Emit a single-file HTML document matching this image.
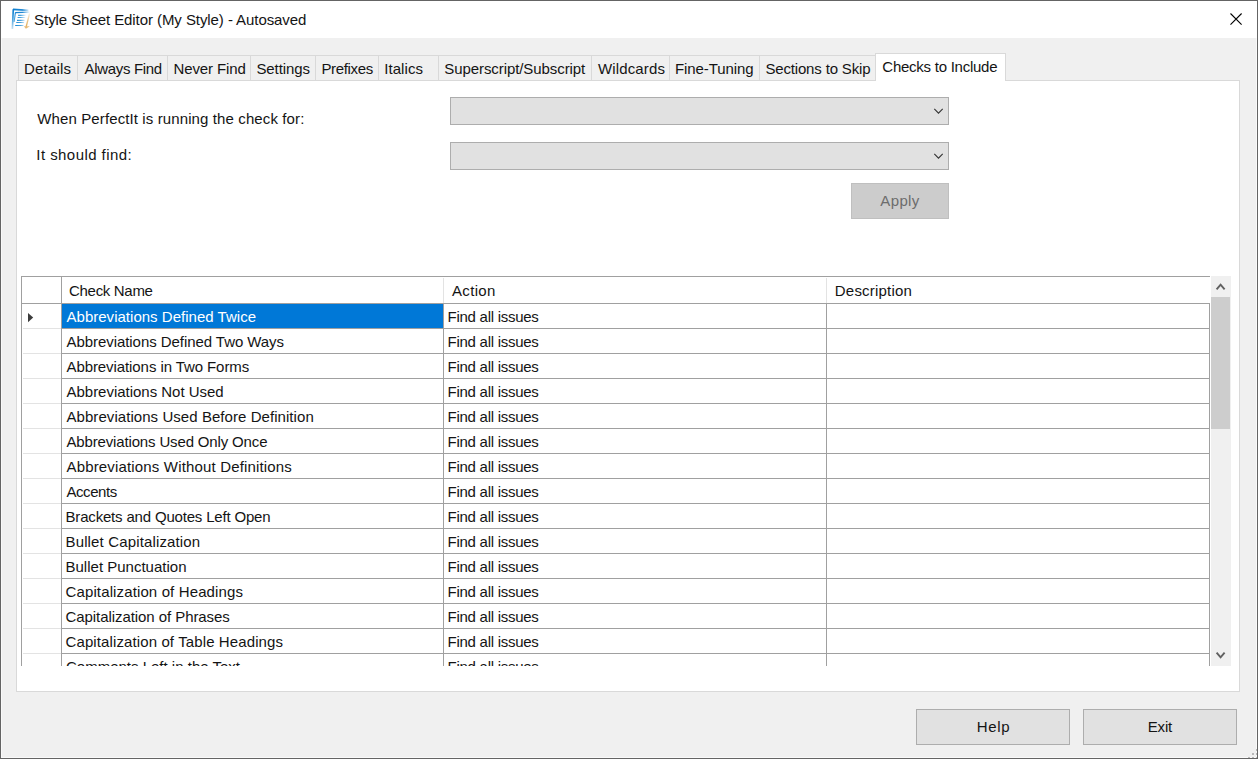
<!DOCTYPE html>
<html><head><meta charset="utf-8"><style>
html,body{margin:0;padding:0;}
body{width:1258px;height:759px;position:relative;overflow:hidden;background:#f0f0f0;font-family:"Liberation Sans", sans-serif;}
.a{position:absolute;}
.t{position:absolute;white-space:nowrap;font-size:15px;line-height:15px;font-family:"Liberation Sans", sans-serif;}
</style></head><body>
<div class="a" style="left:0px;top:0px;width:1258px;height:759px;background:#f0f0f0;"></div>
<div class="a" style="left:1px;top:1px;width:1256px;height:37px;background:#ffffff;"></div>
<div class="a" style="left:1px;top:38px;width:1px;height:720px;background:#f9f9f9;"></div>
<div class="a" style="left:1256px;top:38px;width:1px;height:720px;background:#f9f9f9;"></div>
<div class="a" style="left:1px;top:757px;width:1256px;height:1px;background:#f9f9f9;"></div>
<svg class="a" style="left:10px;top:6px" width="24" height="24" viewBox="0 0 24 24">
<defs>
<linearGradient id="gTop" gradientUnits="userSpaceOnUse" x1="3" y1="0" x2="20" y2="0"><stop offset="0" stop-color="#0b7dcf"/><stop offset="0.55" stop-color="#0b7dcf" stop-opacity="0.9"/><stop offset="1" stop-color="#0b7dcf" stop-opacity="0"/></linearGradient>
<linearGradient id="gLine" gradientUnits="userSpaceOnUse" x1="5" y1="0" x2="16" y2="0"><stop offset="0" stop-color="#1286d4"/><stop offset="0.5" stop-color="#1286d4" stop-opacity="0.75"/><stop offset="1" stop-color="#1286d4" stop-opacity="0"/></linearGradient>
<linearGradient id="gLeft" gradientUnits="userSpaceOnUse" x1="0" y1="3" x2="0" y2="23"><stop offset="0" stop-color="#0b7dcf"/><stop offset="0.5" stop-color="#1a8ad6" stop-opacity="0.8"/><stop offset="1" stop-color="#1a8ad6" stop-opacity="0.25"/></linearGradient>
<linearGradient id="gArr" gradientUnits="userSpaceOnUse" x1="0" y1="7" x2="0" y2="21"><stop offset="0" stop-color="#e0a850" stop-opacity="0.1"/><stop offset="0.6" stop-color="#e0a850" stop-opacity="0.7"/><stop offset="1" stop-color="#e0a850" stop-opacity="0.95"/></linearGradient>
</defs>
<path d="M3 3.3 L18.5 4.4" stroke="url(#gTop)" stroke-width="1.7"/>
<path d="M5.2 6.6 L20 6.2" stroke="url(#gTop)" stroke-width="1.3"/>
<path d="M3.3 3.2 L2.4 23" stroke="url(#gLeft)" stroke-width="1.7"/>
<path d="M5.4 6.6 L4.1 16" stroke="url(#gLeft)" stroke-width="1.1"/>
<path d="M8.1 9.4 L16 9.4 M7.6 11.5 L15.4 11.5 M7 14.4 L14.7 14.4 M6.3 16.5 L14.1 16.5 M5.2 19.5 L13.5 19.5" stroke="url(#gLine)" stroke-width="1.15"/>
<path d="M19.6 7.3 L16.2 20.6" stroke="url(#gArr)" stroke-width="1.4"/>
<path d="M13.9 20.2 L19.8 20.2 L15.9 22.7 Z" fill="#e3ae5e" opacity="0.85"/>
</svg>
<div class="t" style="left:34.10px;top:12.30px;color:#141414;letter-spacing:-0.070px;">Style Sheet Editor (My Style) - Autosaved</div>
<svg class="a" style="left:1229px;top:12px" width="15" height="15" viewBox="0 0 15 15">
<path d="M1.5 1.5 L12.6 12.6 M12.6 1.5 L1.5 12.6" stroke="#000" stroke-width="1.1"/></svg>
<div class="a" style="left:16px;top:80px;width:1224px;height:612px;background:#ffffff;box-sizing:border-box;border:1px solid #d9d9d9;"></div>
<div class="a" style="left:18px;top:55px;width:60px;height:26px;background:#f0f0f0;box-sizing:border-box;border:1px solid #d9d9d9;"></div>
<div class="t" style="left:24.00px;top:61.30px;color:#141414;letter-spacing:0.183px;">Details</div>
<div class="a" style="left:77px;top:55px;width:91px;height:26px;background:#f0f0f0;box-sizing:border-box;border:1px solid #d9d9d9;"></div>
<div class="t" style="left:84.60px;top:61.30px;color:#141414;letter-spacing:-0.330px;">Always Find</div>
<div class="a" style="left:167px;top:55px;width:84px;height:26px;background:#f0f0f0;box-sizing:border-box;border:1px solid #d9d9d9;"></div>
<div class="t" style="left:173.50px;top:61.30px;color:#141414;letter-spacing:-0.122px;">Never Find</div>
<div class="a" style="left:250px;top:55px;width:66px;height:26px;background:#f0f0f0;box-sizing:border-box;border:1px solid #d9d9d9;"></div>
<div class="t" style="left:256.40px;top:61.30px;color:#141414;letter-spacing:-0.071px;">Settings</div>
<div class="a" style="left:315px;top:55px;width:64px;height:26px;background:#f0f0f0;box-sizing:border-box;border:1px solid #d9d9d9;"></div>
<div class="t" style="left:321.40px;top:61.30px;color:#141414;letter-spacing:-0.343px;">Prefixes</div>
<div class="a" style="left:378px;top:55px;width:61px;height:26px;background:#f0f0f0;box-sizing:border-box;border:1px solid #d9d9d9;"></div>
<div class="t" style="left:384.20px;top:61.30px;color:#141414;letter-spacing:0.083px;">Italics</div>
<div class="a" style="left:438px;top:55px;width:154px;height:26px;background:#f0f0f0;box-sizing:border-box;border:1px solid #d9d9d9;"></div>
<div class="t" style="left:444.30px;top:61.30px;color:#141414;letter-spacing:-0.080px;">Superscript/Subscript</div>
<div class="a" style="left:591px;top:55px;width:79px;height:26px;background:#f0f0f0;box-sizing:border-box;border:1px solid #d9d9d9;"></div>
<div class="t" style="left:597.90px;top:61.30px;color:#141414;letter-spacing:0.150px;">Wildcards</div>
<div class="a" style="left:669px;top:55px;width:91px;height:26px;background:#f0f0f0;box-sizing:border-box;border:1px solid #d9d9d9;"></div>
<div class="t" style="left:675.00px;top:61.30px;color:#141414;letter-spacing:-0.080px;">Fine-Tuning</div>
<div class="a" style="left:759px;top:55px;width:117px;height:26px;background:#f0f0f0;box-sizing:border-box;border:1px solid #d9d9d9;"></div>
<div class="t" style="left:765.40px;top:61.30px;color:#141414;letter-spacing:-0.160px;">Sections to Skip</div>
<div class="a" style="left:875px;top:53px;width:131px;height:28px;background:#ffffff;box-sizing:border-box;border:1px solid #d9d9d9;border-bottom:none;"></div>
<div class="t" style="left:882.30px;top:59.30px;color:#141414;letter-spacing:-0.250px;">Checks to Include</div>
<div class="t" style="left:37.30px;top:111.30px;color:#141414;letter-spacing:0.113px;">When PerfectIt is running the check for:</div>
<div class="t" style="left:36.30px;top:147.30px;color:#141414;letter-spacing:0.443px;">It should find:</div>
<div class="a" style="left:450px;top:97px;width:499px;height:28px;background:#e1e1e1;box-sizing:border-box;border:1px solid #adadad;"></div>
<svg class="a" style="left:933px;top:108.2px" width="11" height="7" viewBox="0 0 11 7"><path d="M1.3 0.9 L5.5 5.1 L9.7 0.9" stroke="#333" stroke-width="1.1" fill="none"/></svg>
<div class="a" style="left:450px;top:142px;width:499px;height:28px;background:#e1e1e1;box-sizing:border-box;border:1px solid #adadad;"></div>
<svg class="a" style="left:933px;top:153.2px" width="11" height="7" viewBox="0 0 11 7"><path d="M1.3 0.9 L5.5 5.1 L9.7 0.9" stroke="#333" stroke-width="1.1" fill="none"/></svg>
<div class="a" style="left:851px;top:183px;width:98px;height:36px;background:#cccccc;box-sizing:border-box;border:1px solid #bfbfbf;"></div>
<div class="t" style="left:880.34px;top:193.30px;color:#6d6d6d;letter-spacing:0.350px;">Apply</div>
<div class="a" style="left:21px;top:276px;width:1189px;height:390px;background:#fff;overflow:hidden">
<div class="a" style="left:0px;top:0px;width:1189px;height:1px;background:#a0a0a0"></div><div class="a" style="left:0px;top:0px;width:1px;height:390px;background:#a0a0a0"></div><div class="a" style="left:40px;top:0px;width:1px;height:390px;background:#a0a0a0"></div><div class="a" style="left:0px;top:27px;width:1189px;height:1px;background:#a0a0a0"></div><div class="a" style="left:422px;top:2px;width:1px;height:25px;background:#e3e3e3"></div><div class="a" style="left:805px;top:2px;width:1px;height:25px;background:#e3e3e3"></div><div class="t" style="left:48.10px;top:7.30px;color:#141414;letter-spacing:-0.322px;">Check Name</div><div class="t" style="left:431.00px;top:7.30px;color:#141414;letter-spacing:0.320px;">Action</div><div class="t" style="left:813.80px;top:7.30px;color:#141414;letter-spacing:0.210px;">Description</div><div class="a" style="left:41px;top:28px;width:381px;height:24px;background:#0078d7"></div><div class="t" style="left:45.50px;top:33.30px;color:#fff;letter-spacing:0.019px;">Abbreviations Defined Twice</div><div class="t" style="left:426.60px;top:33.30px;color:#141414;letter-spacing:-0.271px;">Find all issues</div><div class="a" style="left:41px;top:52px;width:1148px;height:1px;background:#a0a0a0"></div><div class="a" style="left:2px;top:52px;width:38px;height:1px;background:#e3e3e3"></div><div class="t" style="left:45.50px;top:58.30px;color:#141414;letter-spacing:-0.059px;">Abbreviations Defined Two Ways</div><div class="t" style="left:426.60px;top:58.30px;color:#141414;letter-spacing:-0.271px;">Find all issues</div><div class="a" style="left:41px;top:77px;width:1148px;height:1px;background:#a0a0a0"></div><div class="a" style="left:2px;top:77px;width:38px;height:1px;background:#e3e3e3"></div><div class="t" style="left:45.50px;top:83.30px;color:#141414;letter-spacing:-0.084px;">Abbreviations in Two Forms</div><div class="t" style="left:426.60px;top:83.30px;color:#141414;letter-spacing:-0.271px;">Find all issues</div><div class="a" style="left:41px;top:102px;width:1148px;height:1px;background:#a0a0a0"></div><div class="a" style="left:2px;top:102px;width:38px;height:1px;background:#e3e3e3"></div><div class="t" style="left:45.50px;top:108.30px;color:#141414;letter-spacing:-0.019px;">Abbreviations Not Used</div><div class="t" style="left:426.60px;top:108.30px;color:#141414;letter-spacing:-0.271px;">Find all issues</div><div class="a" style="left:41px;top:127px;width:1148px;height:1px;background:#a0a0a0"></div><div class="a" style="left:2px;top:127px;width:38px;height:1px;background:#e3e3e3"></div><div class="t" style="left:45.50px;top:133.30px;color:#141414;letter-spacing:0.060px;">Abbreviations Used Before Definition</div><div class="t" style="left:426.60px;top:133.30px;color:#141414;letter-spacing:-0.271px;">Find all issues</div><div class="a" style="left:41px;top:152px;width:1148px;height:1px;background:#a0a0a0"></div><div class="a" style="left:2px;top:152px;width:38px;height:1px;background:#e3e3e3"></div><div class="t" style="left:45.50px;top:158.30px;color:#141414;letter-spacing:-0.152px;">Abbreviations Used Only Once</div><div class="t" style="left:426.60px;top:158.30px;color:#141414;letter-spacing:-0.271px;">Find all issues</div><div class="a" style="left:41px;top:177px;width:1148px;height:1px;background:#a0a0a0"></div><div class="a" style="left:2px;top:177px;width:38px;height:1px;background:#e3e3e3"></div><div class="t" style="left:45.50px;top:183.30px;color:#141414;letter-spacing:0.162px;">Abbreviations Without Definitions</div><div class="t" style="left:426.60px;top:183.30px;color:#141414;letter-spacing:-0.271px;">Find all issues</div><div class="a" style="left:41px;top:202px;width:1148px;height:1px;background:#a0a0a0"></div><div class="a" style="left:2px;top:202px;width:38px;height:1px;background:#e3e3e3"></div><div class="t" style="left:45.50px;top:208.30px;color:#141414;letter-spacing:-0.450px;">Accents</div><div class="t" style="left:426.60px;top:208.30px;color:#141414;letter-spacing:-0.271px;">Find all issues</div><div class="a" style="left:41px;top:227px;width:1148px;height:1px;background:#a0a0a0"></div><div class="a" style="left:2px;top:227px;width:38px;height:1px;background:#e3e3e3"></div><div class="t" style="left:44.50px;top:233.30px;color:#141414;letter-spacing:-0.179px;">Brackets and Quotes Left Open</div><div class="t" style="left:426.60px;top:233.30px;color:#141414;letter-spacing:-0.271px;">Find all issues</div><div class="a" style="left:41px;top:252px;width:1148px;height:1px;background:#a0a0a0"></div><div class="a" style="left:2px;top:252px;width:38px;height:1px;background:#e3e3e3"></div><div class="t" style="left:44.50px;top:258.30px;color:#141414;letter-spacing:0.145px;">Bullet Capitalization</div><div class="t" style="left:426.60px;top:258.30px;color:#141414;letter-spacing:-0.271px;">Find all issues</div><div class="a" style="left:41px;top:277px;width:1148px;height:1px;background:#a0a0a0"></div><div class="a" style="left:2px;top:277px;width:38px;height:1px;background:#e3e3e3"></div><div class="t" style="left:44.50px;top:283.30px;color:#141414;letter-spacing:0.006px;">Bullet Punctuation</div><div class="t" style="left:426.60px;top:283.30px;color:#141414;letter-spacing:-0.271px;">Find all issues</div><div class="a" style="left:41px;top:302px;width:1148px;height:1px;background:#a0a0a0"></div><div class="a" style="left:2px;top:302px;width:38px;height:1px;background:#e3e3e3"></div><div class="t" style="left:44.50px;top:308.30px;color:#141414;letter-spacing:0.128px;">Capitalization of Headings</div><div class="t" style="left:426.60px;top:308.30px;color:#141414;letter-spacing:-0.271px;">Find all issues</div><div class="a" style="left:41px;top:327px;width:1148px;height:1px;background:#a0a0a0"></div><div class="a" style="left:2px;top:327px;width:38px;height:1px;background:#e3e3e3"></div><div class="t" style="left:44.50px;top:333.30px;color:#141414;letter-spacing:-0.067px;">Capitalization of Phrases</div><div class="t" style="left:426.60px;top:333.30px;color:#141414;letter-spacing:-0.271px;">Find all issues</div><div class="a" style="left:41px;top:352px;width:1148px;height:1px;background:#a0a0a0"></div><div class="a" style="left:2px;top:352px;width:38px;height:1px;background:#e3e3e3"></div><div class="t" style="left:44.50px;top:358.30px;color:#141414;letter-spacing:0.113px;">Capitalization of Table Headings</div><div class="t" style="left:426.60px;top:358.30px;color:#141414;letter-spacing:-0.271px;">Find all issues</div><div class="a" style="left:41px;top:377px;width:1148px;height:1px;background:#a0a0a0"></div><div class="a" style="left:2px;top:377px;width:38px;height:1px;background:#e3e3e3"></div><div class="t" style="left:45.00px;top:383.30px;color:#141414;">Comments Left in the Text</div><div class="t" style="left:426.60px;top:383.30px;color:#141414;letter-spacing:-0.271px;">Find all issues</div><div class="a" style="left:41px;top:402px;width:1148px;height:1px;background:#a0a0a0"></div><div class="a" style="left:2px;top:402px;width:38px;height:1px;background:#e3e3e3"></div><div class="a" style="left:422px;top:28px;width:1px;height:362px;background:#a0a0a0"></div><div class="a" style="left:805px;top:28px;width:1px;height:362px;background:#a0a0a0"></div><div class="a" style="left:1188px;top:28px;width:1px;height:362px;background:#a0a0a0"></div><svg class="a" style="left:6.8px;top:36.7px" width="6" height="10" viewBox="0 0 6 10"><path d="M0 0 L5.2 4.6 L0 9.2 Z" fill="#3c3c3c"/></svg>
</div>
<div class="a" style="left:1211px;top:276px;width:20px;height:390px;background:#f0f0f0;"></div>
<div class="a" style="left:1211px;top:297px;width:19px;height:132px;background:#cdcdcd;"></div>
<svg class="a" style="left:1215px;top:282px" width="11" height="9" viewBox="0 0 11 9"><path d="M1.6 7.3 L5.6 2.6 L9.6 7.3" stroke="#606060" stroke-width="1.9" fill="none"/></svg>
<svg class="a" style="left:1215px;top:651px" width="11" height="9" viewBox="0 0 11 9"><path d="M1.6 1.6 L5.6 6.3 L9.6 1.6" stroke="#606060" stroke-width="1.9" fill="none"/></svg>
<div class="a" style="left:916px;top:709px;width:154px;height:36px;background:#e1e1e1;box-sizing:border-box;border:1px solid #adadad;"></div>
<div class="t" style="left:976.68px;top:719.30px;color:#141414;letter-spacing:0.667px;">Help</div>
<div class="a" style="left:1083px;top:709px;width:154px;height:36px;background:#e1e1e1;box-sizing:border-box;border:1px solid #adadad;"></div>
<div class="t" style="left:1147.80px;top:719.30px;color:#141414;letter-spacing:-0.200px;">Exit</div>
<div class="a" style="left:1252px;top:753px;width:2px;height:2px;background:#b9b9b9;"></div>
<div class="a" style="left:1256px;top:749px;width:1px;height:2px;background:#b9b9b9;"></div>
<div class="a" style="left:1256px;top:753px;width:1px;height:2px;background:#b9b9b9;"></div>
<div class="a" style="left:1248px;top:757px;width:2px;height:1px;background:#b9b9b9;"></div>
<div class="a" style="left:1252px;top:757px;width:2px;height:1px;background:#b9b9b9;"></div>
<div class="a" style="left:1256px;top:757px;width:1px;height:1px;background:#b9b9b9;"></div>
<div class="a" style="left:0px;top:0px;width:1258px;height:1px;background:#646464;"></div>
<div class="a" style="left:0px;top:758px;width:1258px;height:1px;background:#646464;"></div>
<div class="a" style="left:0px;top:0px;width:1px;height:759px;background:#646464;"></div>
<div class="a" style="left:1257px;top:0px;width:1px;height:759px;background:#646464;"></div>
</body></html>
